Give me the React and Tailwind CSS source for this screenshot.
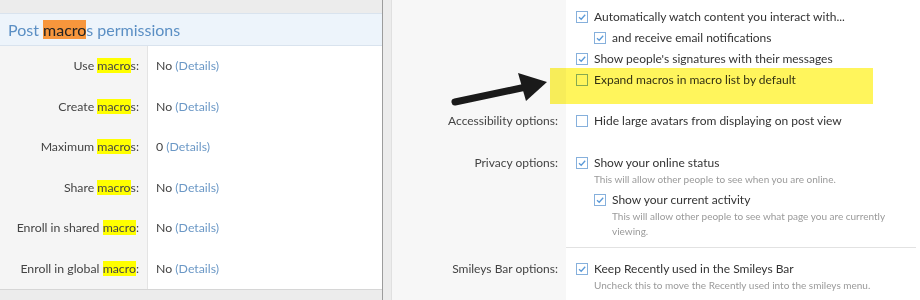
const font = { fontFamily: 'Lato, "Open Sans", sans-serif' };

const permissions = [
  ['Use ', 'macro', 's:', 'No'],
  ['Create ', 'macro', 's:', 'No'],
  ['Maximum ', 'macro', 's:', '0'],
  ['Share ', 'macro', 's:', 'No'],
  ['Enroll in shared ', 'macro', ':', 'No'],
  ['Enroll in global ', 'macro', ':', 'No'],
];

const Checkbox = ({ checked }) => (
  <span className="w-[12px] h-[12px] border border-[#86b0dc] bg-white flex items-center justify-center shrink-0">
    {checked && (
      <svg width="10" height="10" viewBox="0 0 10 10">
        <path d="M2 5.2 L4.2 7.3 L8.2 2.8" fill="none" stroke="#5b9ad8" strokeWidth="1.3" />
      </svg>
    )}
  </span>
);

const Option = ({ checked, children, indent }) => (
  <div className={`flex items-center h-[21px] gap-[6px] ${indent ? 'pl-[18px]' : ''}`}>
    <Checkbox checked={checked} />
    <span className="text-[12px] text-[#333]">{children}</span>
  </div>
);

const Hint = ({ children, indent }) => (
  <div className={`text-[10px] leading-[15px] text-[#9a9a9a] mt-[-1px] ${indent ? 'pl-[36px]' : 'pl-[18px]'}`}>
    {children}
  </div>
);

const Row = ({ label, children, pad = '', height = '', contentClass = '' }) => (
  <div className={`flex ${height}`}>
    <div className={`w-[174px] shrink-0 bg-[#f7f7f7] text-right pr-[8px] text-[12px] text-[#444] ${pad}`}>
      {label && <div className="h-[21px] leading-[21px]">{label}</div>}
    </div>
    <div className={`flex-1 bg-white pl-[10px] ${pad} ${contentClass}`}>{children}</div>
  </div>
);

export default function App() {
  return (
    <div className="w-[920px] h-[300px] overflow-hidden flex bg-white relative" style={font}>
      {/* left panel */}
      <div className="w-[382px] shrink-0 flex flex-col bg-[#ececec]">
        <div className="h-[13px] bg-[#ececec]" />
        <div className="h-[33px] bg-[#edf4fb] border-y border-[#d9e3ee] pl-[8px] flex items-center text-[16px] text-[#5b8fc4]">
          <span>
            Post <span className="bg-[#f7963c] text-[#222]">macro</span>s permissions
          </span>
        </div>
        <div className="flex flex-col bg-white border-b border-[#d6d6d6]">
          {permissions.map(([pre, hl, post, val], i) => (
            <div key={i} className="flex h-[40.5px]">
              <div className="w-[148px] shrink-0 bg-[#f5f5f5] border-r border-[#e4e4e4] flex items-center justify-end pr-[8px] text-[12.3px] text-[#444]">
                <span>
                  {pre}
                  <span className="bg-[#ffff00]">{hl}</span>
                  {post}
                </span>
              </div>
              <div className="flex-1 flex items-center pl-[8px] text-[12.3px] text-[#444]">
                <span>
                  {val} <span className="text-[#6b98c6]">(Details)</span>
                </span>
              </div>
            </div>
          ))}
        </div>
        <div className="flex-1 bg-[#ececec]" />
      </div>

      {/* gutter */}
      <div className="w-[10px] shrink-0 bg-[#ececec] border-l border-[#9c9c9c] border-r border-r-[#e0e0e0]" />

      {/* right panel */}
      <div className="flex-1 flex flex-col">
        <Row pad="pt-[6px]" height="h-[100px]">
          <Option checked>Automatically watch content you interact with...</Option>
          <Option checked indent>and receive email notifications</Option>
          <Option checked>Show people's signatures with their messages</Option>
          <Option>Expand macros in macro list by default</Option>
        </Row>
        <Row label="Accessibility options:" pad="pt-[10px]" height="h-[42px]">
          <Option>Hide large avatars from displaying on post view</Option>
        </Row>
        <Row label="Privacy options:" pad="pt-[10px]" height="h-[106px]" contentClass="border-b border-[#e2e2e2] mr-[4px]">
          <Option checked>Show your online status</Option>
          <Hint>This will allow other people to see when you are online.</Hint>
          <div className="h-[2px]" />
          <Option checked indent>Show your current activity</Option>
          <Hint indent>
            This will allow other people to see what page you are currently
            <br />
            viewing.
          </Hint>
        </Row>
        <Row label="Smileys Bar options:" pad="pt-[10px]" height="flex-1">
          <Option checked>Keep Recently used in the Smileys Bar</Option>
          <Hint>Uncheck this to move the Recently used into the smileys menu.</Hint>
        </Row>
      </div>

      {/* highlight overlay */}
      <div className="absolute left-[550px] top-[68px] w-[323px] h-[36px] bg-[#fff55c] mix-blend-multiply pointer-events-none" />

      {/* arrow */}
      <svg className="absolute left-[448px] top-[68px] pointer-events-none" width="104" height="42" viewBox="0 0 104 42">
        <path d="M7 34 L78 19" stroke="#1a1a1a" strokeWidth="7" strokeLinecap="round" fill="none" />
        <path d="M70 5 L99 14 L78 33 Z" fill="#1a1a1a" />
      </svg>
    </div>
  );
}
